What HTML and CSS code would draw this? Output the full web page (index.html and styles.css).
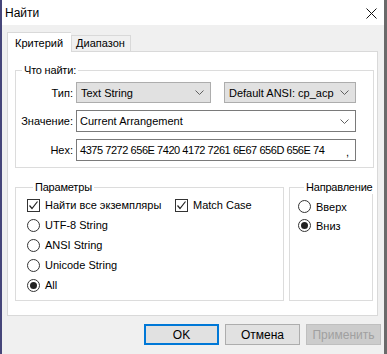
FILE: index.html
```html
<!DOCTYPE html>
<html lang="ru">
<head>
    <meta charset="UTF-8">
    <title>Найти</title>
    <link rel="stylesheet" href="styles.css">
</head>
<body>

    <div class="window">

        <!-- Title bar -->
        <div class="title-bar">
            <span class="title">Найти</span>
            <svg class="close-icon" width="11" height="11" viewBox="0 0 11 11">
                <path d="M0.5 0.5 L10.5 10.5 M10.5 0.5 L0.5 10.5" stroke="#111" stroke-width="1" fill="none"/>
            </svg>
        </div>

        <div class="dialog-body">

            <!-- Tabs -->
            <div class="tabs">
                <div class="tab active">Критерий</div>
                <div class="tab">Диапазон</div>
            </div>

            <div class="tab-panel">

                <fieldset class="group group-find">
                    <legend>Что найти:</legend>
                    <div class="field-grid">
                        <label class="field-label">Тип:</label>
                        <div class="field-pair">
                            <div class="combo combo-type">
                                <span>Text String</span>
                                <svg class="chevron" width="9" height="5" viewBox="0 0 9 5"><path d="M0.5 0.5 L4.5 4.5 L8.5 0.5" stroke="#606060" fill="none"/></svg>
                            </div>
                            <div class="combo combo-enc">
                                <span>Default ANSI: cp_acp</span>
                                <svg class="chevron" width="9" height="5" viewBox="0 0 9 5"><path d="M0.5 0.5 L4.5 4.5 L8.5 0.5" stroke="#606060" fill="none"/></svg>
                            </div>
                        </div>

                        <label class="field-label">Значение:</label>
                        <div class="combo combo-edit">
                            <span>Current Arrangement</span>
                            <svg class="chevron" width="9" height="5" viewBox="0 0 9 5"><path d="M0.5 0.5 L4.5 4.5 L8.5 0.5" stroke="#606060" fill="none"/></svg>
                        </div>

                        <label class="field-label">Hex:</label>
                        <div class="text-box">
                            <span class="hex-text">4375 7272 656E 7420 4172 7261 6E67 656D 656E 74</span>
                            <span class="hex-tail">,</span>
                        </div>
                    </div>
                </fieldset>

                <div class="group-row">
                    <fieldset class="group group-params">
                        <legend>Параметры</legend>
                        <div class="option-row">
                            <span class="check checked">
                                <svg width="11" height="11" viewBox="0 0 11 11"><path d="M1.5 5.5 L4 8.5 L9.5 1.5" stroke="#222" stroke-width="1.2" fill="none"/></svg>
                            </span>
                            <span class="option-text wide">Найти все экземпляры</span>
                            <span class="check checked">
                                <svg width="11" height="11" viewBox="0 0 11 11"><path d="M1.5 5.5 L4 8.5 L9.5 1.5" stroke="#222" stroke-width="1.2" fill="none"/></svg>
                            </span>
                            <span class="option-text">Match Case</span>
                        </div>
                        <div class="option-row">
                            <span class="radio"></span>
                            <span class="option-text">UTF-8 String</span>
                        </div>
                        <div class="option-row">
                            <span class="radio"></span>
                            <span class="option-text">ANSI String</span>
                        </div>
                        <div class="option-row">
                            <span class="radio"></span>
                            <span class="option-text">Unicode String</span>
                        </div>
                        <div class="option-row">
                            <span class="radio selected"></span>
                            <span class="option-text">All</span>
                        </div>
                    </fieldset>

                    <fieldset class="group group-dir">
                        <legend>Направление</legend>
                        <div class="option-row short">
                            <span class="radio"></span>
                            <span class="option-text">Вверх</span>
                        </div>
                        <div class="option-row short">
                            <span class="radio selected"></span>
                            <span class="option-text">Вниз</span>
                        </div>
                    </fieldset>
                </div>

            </div>

            <!-- Dialog buttons -->
            <div class="button-row">
                <button class="btn default">OK</button>
                <button class="btn">Отмена</button>
                <button class="btn" disabled>Применить</button>
            </div>

        </div>
    </div>

</body>
</html>
```

FILE: styles.css
```css
/* Reset */
* {
    box-sizing: border-box;
    margin: 0;
    padding: 0;
}

html, body {
    width: 387px;
    height: 354px;
    overflow: hidden;
}

body {
    font-family: 'Liberation Sans', Arial, sans-serif;
    font-size: 11px;
    color: #000000;
    background-color: #3a3a3a;
}

/* Window frame */
.window {
    width: 387px;
    height: 354px;
    border-left: 2px solid #46467a;
    border-right: 3px solid #6a6a6a;
    display: flex;
    flex-direction: column;
    background-color: #f0f0f0;
}

.title-bar {
    height: 25px;
    background-color: #ffffff;
    display: flex;
    align-items: center;
    justify-content: space-between;
    padding: 0 7px 0 3px;
}

.title {
    font-size: 12px;
}

.close-icon {
    margin-top: 1px;
}

.dialog-body {
    flex: 1;
    padding: 7px 0 0 5px;
}

/* Tabs */
.tabs {
    display: flex;
    align-items: flex-end;
    height: 19px;
}

.tab {
    height: 16px;
    padding: 0 5px 0 4px;
    line-height: 15px;
    border: 1px solid #d9d9d9;
    border-bottom: none;
    background-color: #f0f0f0;
}

.tab.active {
    height: 20px;
    margin-bottom: -1px;
    padding: 0 8px 0 7px;
    line-height: 20px;
    background-color: #ffffff;
    border-right: none;
    position: relative;
    z-index: 1;
}

.tab-panel {
    width: 371px;
    height: 265px;
    background-color: #ffffff;
    border: 1px solid #d9d9d9;
    padding: 11px 3px 0 7px;
}

/* Group boxes */
.group {
    border: 1px solid #dcdcdc;
    min-width: 0;
}

.group legend {
    margin-left: 6px;
    padding: 0 2px;
    line-height: 14px;
    letter-spacing: -0.2px;
    white-space: nowrap;
}

.group-find {
    height: 105px;
    padding: 5px 17px 0 0;
}

.field-grid {
    display: grid;
    grid-template-columns: 57px 1fr;
    column-gap: 3px;
    row-gap: 7px;
    align-items: center;
}

.field-grid .field-label {
    text-align: right;
}

.field-pair {
    display: flex;
    gap: 13px;
}

.combo {
    height: 21px;
    display: flex;
    align-items: center;
    justify-content: space-between;
    padding: 0 6px 0 4px;
    background-color: #e1e1e1;
    border: 1px solid #adadad;
    white-space: nowrap;
}

.combo-type {
    width: 135px;
}

.combo-enc {
    width: 132px;
}

.combo-edit {
    height: 22px;
    background-color: #ffffff;
    border-color: #7a7a7a;
    padding-left: 3px;
}

.text-box {
    height: 22px;
    display: flex;
    align-items: center;
    justify-content: space-between;
    padding: 0 6px 0 3px;
    background-color: #ffffff;
    border: 1px solid #7a7a7a;
    white-space: nowrap;
    overflow: hidden;
}

.hex-text {
    letter-spacing: -0.45px;
}

.hex-tail {
    margin-top: 3px;
}

.group-row {
    display: flex;
    gap: 5px;
    margin-top: 12px;
}

.group-params {
    width: 269px;
    height: 121px;
    padding: 1px 0 0 11px;
}

.group-dir {
    width: 84px;
    height: 121px;
    padding: 3px 0 0 8px;
}

/* Checkboxes and radios */
.option-row {
    height: 20px;
    display: flex;
    align-items: center;
    white-space: nowrap;
}

.option-row.short {
    height: 19px;
}

.option-text {
    margin-left: 5px;
}

.option-text.wide {
    width: 130px;
}

.check {
    width: 13px;
    height: 13px;
    flex: none;
    border: 1px solid #333333;
    background-color: #ffffff;
    display: flex;
    align-items: center;
    justify-content: center;
}

.radio {
    width: 13px;
    height: 13px;
    flex: none;
    border: 1px solid #333333;
    border-radius: 50%;
    background-color: #ffffff;
    display: flex;
    align-items: center;
    justify-content: center;
}

.radio.selected::after {
    content: "";
    width: 7px;
    height: 7px;
    border-radius: 50%;
    background-color: #222222;
}

/* Buttons */
.button-row {
    display: flex;
    justify-content: flex-end;
    gap: 6px;
    margin-top: 8px;
    padding-right: 3px;
}

.btn {
    width: 75px;
    height: 21px;
    font-family: inherit;
    font-size: 12px;
    color: #000000;
    background-color: #e1e1e1;
    border: 1px solid #adadad;
}

.btn.default {
    border: 2px solid #0078d7;
}

.btn:disabled {
    color: #a0a0a0;
    background-color: #cccccc;
    border-color: #bfbfbf;
}
```
